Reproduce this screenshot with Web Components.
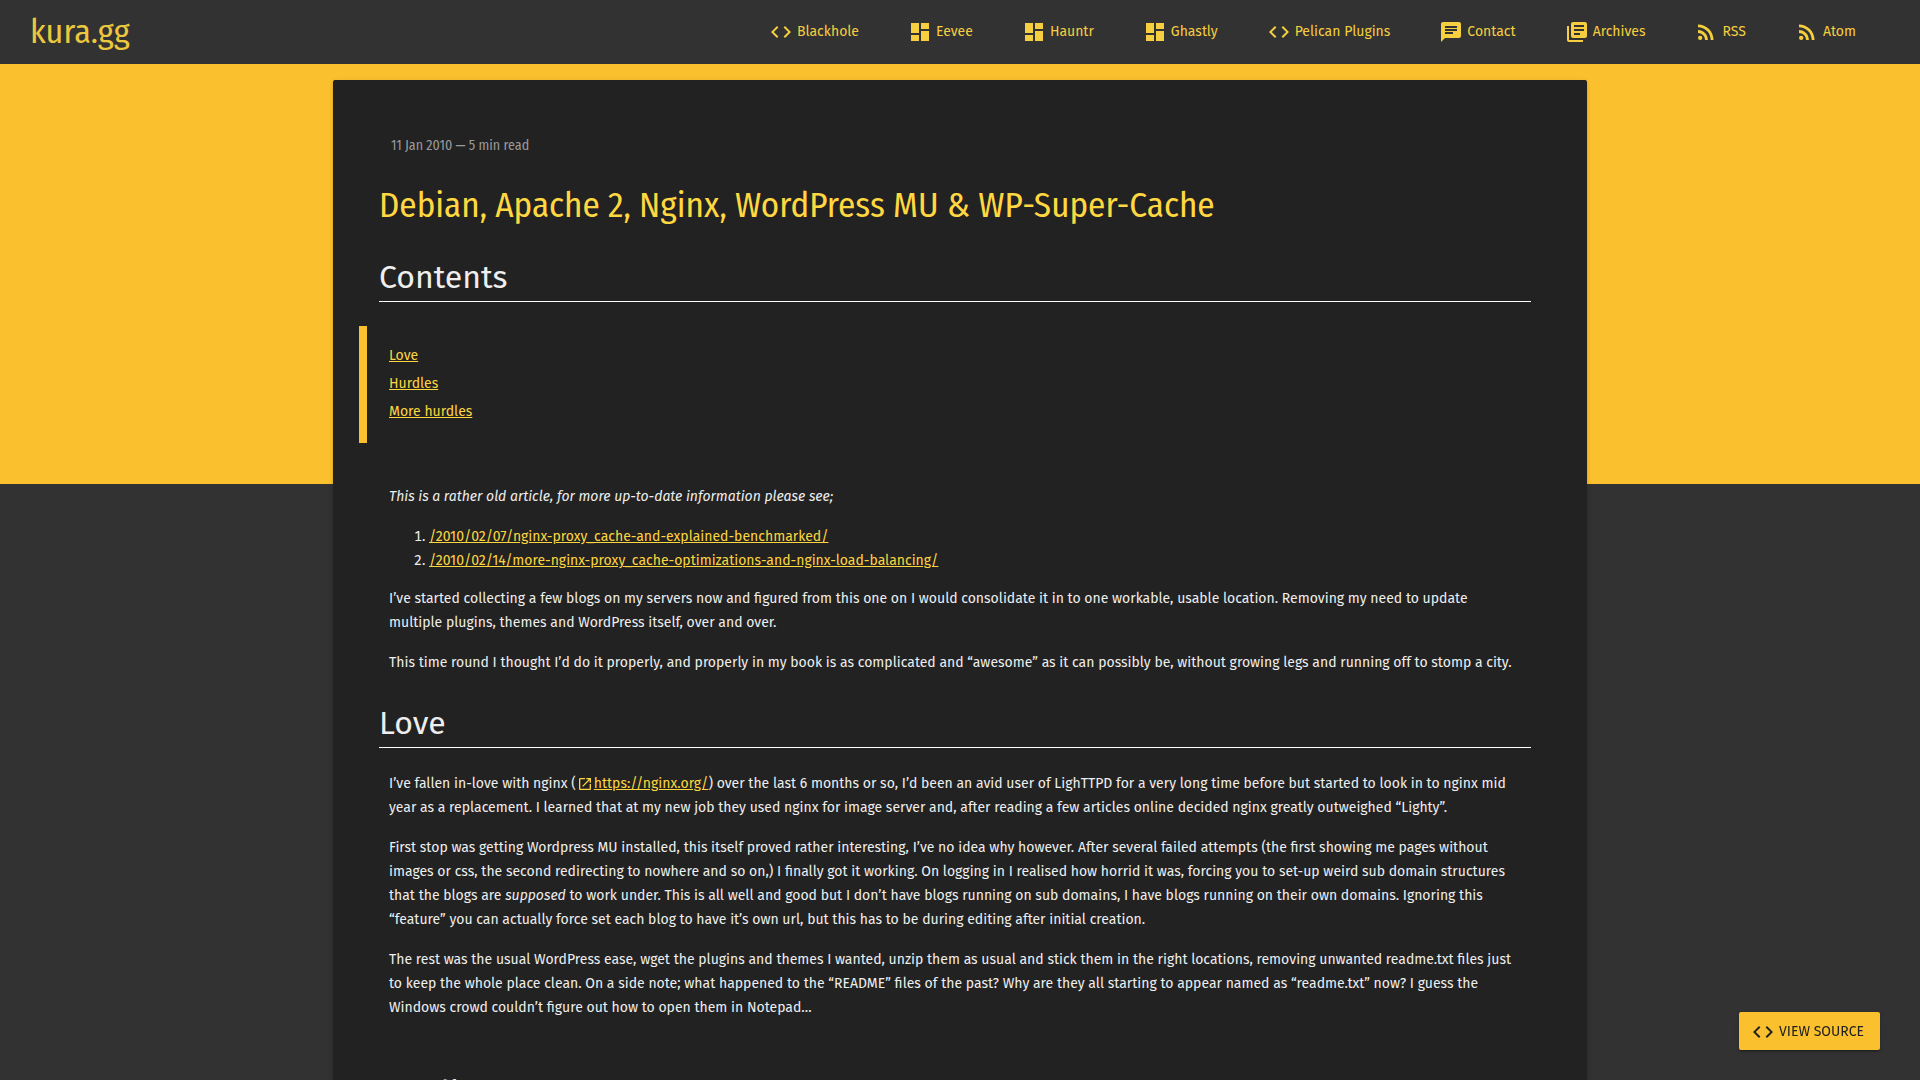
<!DOCTYPE html>
<html lang="en">
<head>
<meta charset="utf-8">
<title>Debian, Apache 2, Nginx, WordPress MU &amp; WP-Super-Cache - kura.gg</title>
<style>
  :root {
    --amber: #fbc02d;
    --title: #ffd740;
    --link: #fdd63f;
    --nav: #f5cf3f;
    --page: #323232;
    --card: #222;
    --text: #eee;
    --condensed: "Fira Sans Condensed", "Roboto Condensed", "Fira Sans", sans-serif;
  }
  html { scrollbar-width: none; background: var(--page); }
  body {
    margin: 0;
    font: 14px/24px "Fira Sans", "Open Sans", sans-serif;
    color: var(--text);
  }
  p { margin: 0 0 16px; }
  a { color: var(--link); }
  ol { margin: 0 0 14px; padding-left: 40px; }
</style>
</head>
<body>
<site-header>
  <nav-item icon="code" href="#blackhole">Blackhole</nav-item>
  <nav-item icon="dashboard" href="#eevee">Eevee</nav-item>
  <nav-item icon="dashboard" href="#hauntr">Hauntr</nav-item>
  <nav-item icon="dashboard" href="#ghastly">Ghastly</nav-item>
  <nav-item icon="code" href="#pelican">Pelican Plugins</nav-item>
  <nav-item icon="chat" href="#contact">Contact</nav-item>
  <nav-item icon="library" href="#archives">Archives</nav-item>
  <nav-item icon="rss" href="#rss">RSS</nav-item>
  <nav-item icon="rss" href="#atom">Atom</nav-item>
</site-header>
<article-card>
  <span slot="meta">11 Jan 2010 — 5 min read</span>
  <span slot="title">Debian, Apache 2, Nginx, WordPress MU &amp; WP-Super-Cache</span>
  <article-section heading="Contents">
    <toc-box>
      <a href="#love">Love</a>
      <a href="#hurdles">Hurdles</a>
      <a href="#more-hurdles">More hurdles</a>
    </toc-box>
    <p><em>This is a rather old article, for more up-to-date information please see;</em></p>
    <ol>
      <li><a href="#1">/2010/02/07/nginx-proxy_cache-and-explained-benchmarked/</a></li>
      <li><a href="#2">/2010/02/14/more-nginx-proxy_cache-optimizations-and-nginx-load-balancing/</a></li>
    </ol>
    <p>I’ve started collecting a few blogs on my servers now and figured from this one on I would consolidate it in to one workable, usable location. Removing my need to update multiple plugins, themes and WordPress itself, over and over.</p>
    <p>This time round I thought I’d do it properly, and properly in my book is as complicated and “awesome” as it can possibly be, without growing legs and running off to stomp a city.</p>
  </article-section>
  <article-section heading="Love" id="love" class="spaced">
    <p>I’ve fallen in-love with nginx (<external-link href="#nginx">https://nginx.org/</external-link>) over the last 6 months or so, I’d been an avid user of LighTTPD for a very long time before but started to look in to nginx mid year as a replacement. I learned that at my new job they used nginx for image server and, after reading a few articles online decided nginx greatly outweighed “Lighty”.</p>
    <p>First stop was getting Wordpress MU installed, this itself proved rather interesting, I’ve no idea why however. After several failed attempts (the first showing me pages without images or css, the second redirecting to nowhere and so on,) I finally got it working. On logging in I realised how horrid it was, forcing you to set-up weird sub domain structures that the blogs are <em>supposed</em> to work under. This is all well and good but I don’t have blogs running on sub domains, I have blogs running on their own domains. Ignoring this “feature” you can actually force set each blog to have it’s own url, but this has to be during editing after initial creation.</p>
    <p>The rest was the usual WordPress ease, wget the plugins and themes I wanted, unzip them as usual and stick them in the right locations, removing unwanted readme.txt files just to keep the whole place clean. On a side note; what happened to the “README” files of the past? Why are they all starting to appear named as “readme.txt” now? I guess the Windows crowd couldn’t figure out how to open them in Notepad…</p>
  </article-section>
  <article-section heading="Hurdles" id="hurdles"></article-section>
</article-card>
<source-button>View source</source-button>

<script>
  const GLYPHS = {
    code: 'M9.4 16.6L4.8 12l4.6-4.6L8 6l-6 6 6 6 1.4-1.4zm5.2 0l4.6-4.6-4.6-4.6L16 6l6 6-6 6-1.4-1.4z',
    dashboard: 'M3 13h8V3H3v10zm0 8h8v-6H3v6zm10 0h8V11h-8v10zm0-18v6h8V3h-8z',
    chat: 'M20 2H4c-1.1 0-1.99.9-1.99 2L2 22l4-4h14c1.1 0 2-.9 2-2V4c0-1.1-.9-2-2-2zM6 9h12v2H6V9zm8 5H6v-2h8v2zm4-6H6V6h12v2z',
    library: 'M4 6H2v14c0 1.1.9 2 2 2h14v-2H4V6zm16-4H8c-1.1 0-2 .9-2 2v12c0 1.1.9 2 2 2h12c1.1 0 2-.9 2-2V4c0-1.1-.9-2-2-2zm-1 9H9V9h10v2zm-4 4H9v-2h6v2zm4-8H9V5h10v2z',
    rss: 'M6.18 15.64a2.18 2.18 0 1 1 0 4.36 2.18 2.18 0 0 1 0-4.36zM4 4.44v2.83c7.03 0 12.73 5.7 12.73 12.73h2.83c0-8.59-6.97-15.56-15.56-15.56zm0 5.66v2.83c3.9 0 7.07 3.17 7.07 7.07h2.83c0-5.47-4.43-9.9-9.9-9.9z',
    open: 'M19 19H5V5h7V3H5c-1.11 0-2 .9-2 2v14c0 1.1.89 2 2 2h14c1.1 0 2-.9 2-2v-7h-2v7zM14 3v2h3.59l-9.83 9.83 1.41 1.41L19 6.41V10h2V3h-7z'
  };

  const define = (name, render) => customElements.define(name, class extends HTMLElement {
    connectedCallback() {
      if (this.shadowRoot) return;
      this.attachShadow({ mode: 'open' }).innerHTML = render(this).replace(/>\s+</g, '><').trim();
    }
  });

  define('md-icon', el => `
    <style>
      :host { display: inline-block; width: var(--icon-size, 24px); height: var(--icon-size, 24px); flex: none; }
      svg { display: block; width: 100%; height: 100%; fill: currentColor; }
    </style>
    <svg viewBox="0 0 24 24" aria-hidden="true"><path d="${GLYPHS[el.getAttribute('name')]}"/></svg>`);

  define('nav-item', el => `
    <style>
      :host { display: block; }
      a { display: flex; align-items: center; gap: 4px; height: 64px; padding: 0 24px; color: var(--nav); text-decoration: none; white-space: nowrap; }
    </style>
    <a href="${el.getAttribute('href')}"><md-icon name="${el.getAttribute('icon')}"></md-icon><span><slot></slot></span></a>`);

  define('site-header', () => `
    <style>
      :host { display: block; }
      header { display: flex; align-items: center; justify-content: space-between; height: 64px; padding: 0 40px 0 30px; background: var(--page); }
      .logo { font-family: var(--condensed); font-size: 34px; line-height: 64px; color: #ebc73f; text-decoration: none; }
      nav { display: flex; gap: 1px; }
    </style>
    <header><a class="logo" href="#home">kura.gg</a><nav><slot></slot></nav></header>`);

  define('article-card', () => `
    <style>
      :host { display: block; padding: 16px 24px 24px; background: linear-gradient(var(--amber) 0 420px, transparent 420px); }
      article { box-sizing: border-box; max-width: 1254px; margin: 0 auto; padding: 54px 56px 40px 46px; background: var(--card); border-radius: 2px;
        box-shadow: 0 2px 2px rgba(0,0,0,.14), 0 3px 1px -2px rgba(0,0,0,.2), 0 1px 5px rgba(0,0,0,.12); }
      .meta { padding-left: 12px; font-family: var(--condensed); color: #9a9a9a; }
      h1 { margin: 23px 0 24px; font-family: var(--condensed); font-size: 35px; line-height: 48px; font-weight: 400; color: var(--title); }
    </style>
    <article>
      <div class="meta"><slot name="meta"></slot></div>
      <h1><slot name="title"></slot></h1>
      <slot></slot>
    </article>`);

  define('article-section', el => `
    <style>
      :host { display: block; }
      :host(.spaced) { padding-bottom: 8px; }
      h2 { margin: 24px 0; font-size: 32px; line-height: 48px; font-weight: 400; border-bottom: 1px solid #fff; }
      .body { padding: 0 10px; }
    </style>
    <section><h2>${el.getAttribute('heading')}</h2><div class="body"><slot></slot></div></section>`);

  define('toc-box', () => `
    <style>
      :host { display: block; margin: 0 0 42px -30px; }
      nav { display: flex; flex-direction: column; align-items: flex-start; gap: 4px; padding: 18px 22px 19px; border-left: 8px solid var(--amber); }
    </style>
    <nav aria-label="Contents"><slot></slot></nav>`);

  define('external-link', el => `
    <style>
      :host { display: inline; --icon-size: 16px; }
      a { color: var(--link); }
      md-icon { margin: 0 1px; color: var(--link); vertical-align: -4px; }
    </style>
    <md-icon name="open"></md-icon><a href="${el.getAttribute('href')}"><slot></slot></a>`);

  define('source-button', () => `
    <style>
      :host { display: block; position: fixed; right: 40px; bottom: 30px; }
      button { display: flex; align-items: center; gap: 4px; height: 38px; padding: 1px 16px 0 12px; border: 0; border-radius: 2px;
        background: var(--amber); color: var(--card); font: inherit; text-transform: uppercase; cursor: pointer;
        box-shadow: 0 2px 2px rgba(0,0,0,.14), 0 3px 1px -2px rgba(0,0,0,.2), 0 1px 5px rgba(0,0,0,.12); }
    </style>
    <button type="button"><md-icon name="code"></md-icon><span><slot></slot></span></button>`);
</script>
</body>
</html>
